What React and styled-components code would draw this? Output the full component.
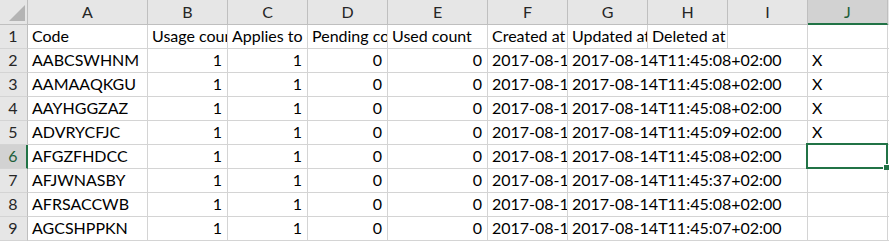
import React from "react";
import styled, { createGlobalStyle, css } from "styled-components";

const Global = createGlobalStyle`
  html, body { margin: 0; padding: 0; background: #ffffff; }
  body { font-family: Lato, "Open Sans", sans-serif; }
`;

const GREEN = "#217346";
const GRID = "#d4d4d4";
const HEAD_LINE = "#bfbfbf";

const Sheet = styled.div`
  display: grid;
  grid-template-columns: 28px 120px 80px 80px 80px 100px 80px 80px 80px 80px 80px 1fr;
  grid-template-rows: 25px repeat(9, 24px);
  width: 889px;
  height: 241px;
  overflow: hidden;
  font-family: Lato, "Open Sans", sans-serif;
  font-size: 16px;
  color: #000;
`;

const Corner = styled.div`
  position: relative;
  background: #e6e6e6;
  border-right: 1px solid ${HEAD_LINE};
  border-bottom: 1px solid ${HEAD_LINE};
  box-sizing: border-box;
  display: flex;
  align-items: flex-end;
  justify-content: flex-end;
  padding: 0 2px 3px 0;
`;

const ColHead = styled.div`
  background: ${(p) => (p.$active ? "#d2d2d2" : "#e6e6e6")};
  border-right: 1px solid ${HEAD_LINE};
  border-bottom: ${(p) => (p.$active ? `2px solid ${GREEN}` : `1px solid ${HEAD_LINE}`)};
  box-sizing: border-box;
  display: flex;
  align-items: flex-end;
  justify-content: center;
  padding-bottom: ${(p) => (p.$active ? "3px" : "4px")};
  line-height: 16px;
  color: ${(p) => (p.$active ? "#1d5e3a" : "#262626")};
`;

const RowHead = styled.div`
  background: ${(p) => (p.$active ? "#d2d2d2" : "#e6e6e6")};
  border-right: ${(p) => (p.$active ? `2px solid ${GREEN}` : `1px solid ${HEAD_LINE}`)};
  border-bottom: 1px solid ${GRID};
  box-sizing: border-box;
  display: flex;
  align-items: flex-end;
  justify-content: center;
  padding-bottom: 4px;
  padding-right: ${(p) => (p.$active ? "0" : "1px")};
  line-height: 16px;
  color: ${(p) => (p.$active ? "#1d5e3a" : "#262626")};
`;

const Cell = styled.div`
  position: relative;
  border-right: 1px solid ${GRID};
  border-bottom: 1px solid ${GRID};
  box-sizing: border-box;
  display: flex;
  align-items: flex-end;
  justify-content: ${(p) => (p.$num ? "flex-end" : "flex-start")};
  padding: 0 ${(p) => (p.$num ? "5px" : "3px")} 4px ${(p) => (p.$num ? "3px" : "4px")};
  line-height: 16px;
  white-space: nowrap;
  overflow: hidden;
  grid-column: ${(p) => (p.$span ? `span ${p.$span}` : "auto")};
  ${(p) =>
    p.$selected &&
    css`
      overflow: visible;
      z-index: 2;
      &::after {
        content: "";
        position: absolute;
        top: -2px;
        left: -2px;
        right: -1px;
        bottom: -1px;
        border: 2px solid ${GREEN};
      }
      &::before {
        content: "";
        position: absolute;
        right: -2px;
        bottom: -2px;
        width: 5px;
        height: 5px;
        background: ${GREEN};
        border-left: 1px solid #fff;
        border-top: 1px solid #fff;
        z-index: 3;
      }
    `}
`;

const Filler = styled.div`
  border-bottom: 1px solid ${GRID};
  box-sizing: border-box;
  background: ${(p) => (p.$head ? "#e6e6e6" : "#fff")};
`;

const CornerMark = () => (
  <svg width="16" height="16" viewBox="0 0 16 16">
    <polygon points="0,16 16,16 16,0" fill="#b4b4b4" />
  </svg>
);

const cols = ["A", "B", "C", "D", "E", "F", "G", "H", "I", "J"];

const data = [
  ["AABCSWHNM", "2017-08-14T11:45:08+02:00", true],
  ["AAMAAQKGU", "2017-08-14T11:45:08+02:00", true],
  ["AAYHGGZAZ", "2017-08-14T11:45:08+02:00", true],
  ["ADVRYCFJC", "2017-08-14T11:45:09+02:00", true],
  ["AFGZFHDCC", "2017-08-14T11:45:08+02:00", false],
  ["AFJWNASBY", "2017-08-14T11:45:37+02:00", false],
  ["AFRSACCWB", "2017-08-14T11:45:08+02:00", false],
  ["AGCSHPPKN", "2017-08-14T11:45:07+02:00", false],
];

export default function App() {
  return (
    <>
      <Global />
      <Sheet>
        <Corner>
          <CornerMark />
        </Corner>
        {cols.map((c) => (
          <ColHead key={c} $active={c === "J"}>
            {c}
          </ColHead>
        ))}
        <Filler $head />

        <RowHead>1</RowHead>
        <Cell>Code</Cell>
        <Cell>Usage count</Cell>
        <Cell>Applies to count</Cell>
        <Cell>Pending count</Cell>
        <Cell>Used count</Cell>
        <Cell>Created at</Cell>
        <Cell>Updated at</Cell>
        <Cell>Deleted at</Cell>
        <Cell />
        <Cell />
        <Filler />

        {data.map(([code, date, x], i) => {
          const row = i + 2;
          return (
            <React.Fragment key={code}>
              <RowHead $active={row === 6}>{row}</RowHead>
              <Cell>{code}</Cell>
              <Cell $num>1</Cell>
              <Cell $num>1</Cell>
              <Cell $num>0</Cell>
              <Cell $num>0</Cell>
              <Cell>{date}</Cell>
              <Cell $span={3}>{date}</Cell>
              <Cell $selected={row === 6}>{x ? "X" : ""}</Cell>
              <Filler />
            </React.Fragment>
          );
        })}
      </Sheet>
    </>
  );
}
